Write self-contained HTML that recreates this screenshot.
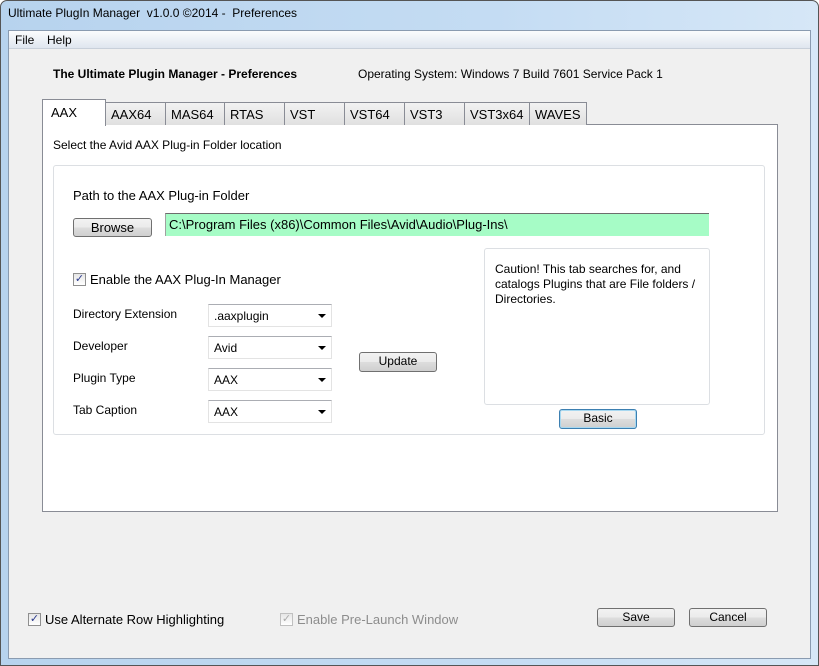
<!DOCTYPE html>
<html><head><style>
*{box-sizing:border-box;margin:0;padding:0}
body{width:819px;height:666px;overflow:hidden;font-family:"Liberation Sans",sans-serif;font-size:12px;color:#000;background:#fff;position:relative}
.a{position:absolute}
.frame{left:0;top:0;width:819px;height:666px;border:1px solid #555;border-radius:7px 7px 0 0;background:linear-gradient(90deg,#b7d3ee,#c4dcf3 60%,#d6e7f7);}
.client{left:8px;top:30px;width:803px;height:629px;background:#f0f0f0;border:1px solid #8a9bb0}
.menu{left:9px;top:31px;width:801px;height:18px;background:linear-gradient(#fbfcfd,#dfe6ef);border-bottom:1px solid #c8d0da}
.btn{position:absolute;border:1px solid #707070;border-radius:3px;background:linear-gradient(#f2f2f2 0%,#ebebeb 50%,#dddddd 51%,#cfcfcf 100%);text-align:center;font-size:12px;line-height:17px}
.tab{position:absolute;top:102px;height:23px;border:1px solid #898c95;border-bottom:none;background:linear-gradient(#f2f2f2,#e0e0e0);font-size:13px;padding:4px 0 0 5px}
.combo{position:absolute;left:208px;width:124px;height:23px;background:#fff;border:1px solid #e3e3e3;border-top-color:#abadb3;font-size:12px;padding:4px 0 0 5px}
.combo:after{content:"";position:absolute;right:5px;top:9px;border-left:4px solid transparent;border-right:4px solid transparent;border-top:4px solid #000}
.lbl{position:absolute;left:73px;font-size:12px}
.cb{position:absolute;width:13px;height:13px;border:1px solid #8f8f8f;background:linear-gradient(#e6e6e6,#fff);font-size:11px;line-height:11px;text-align:center;color:#2b3a8c}
</style></head><body>
<div class="a frame"></div>
<div class="a" style="left:8px;top:6px;font-size:12px">Ultimate PlugIn Manager&nbsp; v1.0.0 ©2014 -&nbsp; Preferences</div>
<div class="a client"></div>
<div class="a menu"></div>
<div class="a" style="left:15px;top:33px">File</div>
<div class="a" style="left:47px;top:33px">Help</div>
<div class="a" style="left:53px;top:67px;font-weight:bold;font-size:12px">The Ultimate Plugin Manager - Preferences</div>
<div class="a" style="left:358px;top:67px">Operating System: Windows 7 Build 7601 Service Pack 1</div>

<div class="a" style="left:42px;top:124px;width:736px;height:388px;background:#fff;border:1px solid #898c95"></div>
<div class="tab" style="left:105px;width:61px">AAX64</div>
<div class="tab" style="left:165px;width:60px">MAS64</div>
<div class="tab" style="left:224px;width:61px">RTAS</div>
<div class="tab" style="left:284px;width:61px">VST</div>
<div class="tab" style="left:344px;width:61px">VST64</div>
<div class="tab" style="left:404px;width:61px">VST3</div>
<div class="tab" style="left:464px;width:66px">VST3x64</div>
<div class="tab" style="left:529px;width:58px">WAVES</div>
<div class="a" style="left:42px;top:99px;width:64px;height:27px;background:#fff;border:1px solid #898c95;border-bottom:none;font-size:13px;padding:5px 0 0 8px">AAX</div>

<div class="a" style="left:53px;top:138px">Select the Avid AAX Plug-in Folder location</div>
<div class="a" style="left:53px;top:165px;width:712px;height:270px;border:1px solid #dcdfe3;border-radius:3px"></div>
<div class="a" style="left:73px;top:188px;font-size:13px">Path to the AAX Plug-in Folder</div>
<div class="btn" style="left:73px;top:218px;width:79px;height:19px;font-size:13px">Browse</div>
<div class="a" style="left:165px;top:213px;width:544px;height:23px;background:#a6fcc6;border-top:1px solid #6d6d6d;border-left:1px solid #a0a0a0;font-size:13px;padding:3px 0 0 3px">C:\Program Files (x86)\Common Files\Avid\Audio\Plug-Ins\</div>

<div class="cb" style="left:73px;top:273px">✓</div>
<div class="a" style="left:90px;top:272px;font-size:13px">Enable the AAX Plug-In Manager</div>
<div class="lbl" style="top:307px">Directory Extension</div>
<div class="lbl" style="top:339px">Developer</div>
<div class="lbl" style="top:371px">Plugin Type</div>
<div class="lbl" style="top:403px">Tab Caption</div>
<div class="combo" style="top:304px">.aaxplugin</div>
<div class="combo" style="top:336px">Avid</div>
<div class="combo" style="top:368px">AAX</div>
<div class="combo" style="top:400px">AAX</div>
<div class="btn" style="left:359px;top:352px;width:78px;height:20px">Update</div>

<div class="a" style="left:484px;top:248px;width:226px;height:157px;border:1px solid #dcdfe3;border-radius:3px;padding:13px 0 0 10px;line-height:15px;font-size:12px">Caution! This tab searches for, and catalogs Plugins that are File folders / Directories.</div>
<div class="btn" style="left:559px;top:409px;width:78px;height:20px;border-color:#3c7fb1;box-shadow:inset 0 0 0 1px #a8d8f0">Basic</div>

<div class="cb" style="left:28px;top:613px">✓</div>
<div class="a" style="left:45px;top:612px;font-size:13px">Use Alternate Row Highlighting</div>
<div class="cb" style="left:280px;top:613px;color:#aaa;border-color:#c0c0c0">✓</div>
<div class="a" style="left:297px;top:612px;font-size:13px;color:#8d8d8d">Enable Pre-Launch Window</div>
<div class="btn" style="left:597px;top:608px;width:78px;height:19px">Save</div>
<div class="btn" style="left:689px;top:608px;width:78px;height:19px">Cancel</div>
</body></html>
